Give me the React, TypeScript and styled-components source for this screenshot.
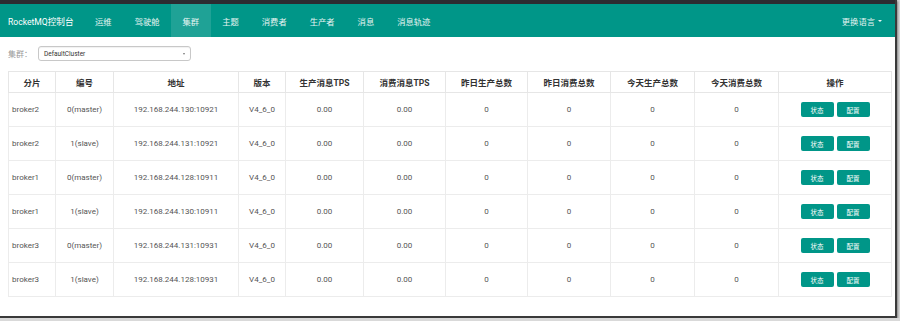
import React from 'react'
import styled, { createGlobalStyle } from 'styled-components'

const GlobalStyle = createGlobalStyle`
  html, body {
    margin: 0;
    padding: 0;
    background: #d9d9d9;
    font-family: Roboto, "Noto Sans CJK SC", sans-serif;
  }
`

const Frame = styled.div`
  width: 895px;
  height: 316px;
  background: #fff;
  border-right: 2px solid #3a3a3a;
  border-bottom: 2px solid #3a3a3a;
  box-shadow: 1px 1px 2px rgba(0, 0, 0, 0.4);
  overflow: hidden;
`
const TopStrip = styled.div`
  height: 4px;
  background: #2c2c31;
`
const Navbar = styled.div`
  height: 33px;
  background: #009688;
  display: flex;
  align-items: stretch;
  padding: 0 8px;
  color: #fff;
`
const Brand = styled.div`
  display: flex;
  align-items: center;
  font-size: 8.6px;
  margin-right: 10px;
`
const NavItem = styled.div<{ $active?: boolean }>`
  display: flex;
  align-items: center;
  padding: 0 11.5px;
  font-size: 8.3px;
  color: #e6f4f2;
  background: ${(p) => (p.$active ? 'rgba(255,255,255,0.12)' : 'transparent')};
`
const Lang = styled.div`
  margin-left: auto;
  display: flex;
  align-items: center;
  gap: 3px;
  font-size: 8.3px;
  color: #e6f4f2;
  padding-right: 5px;
`
const Caret = styled.span`
  width: 0;
  height: 0;
  border-left: 2px solid transparent;
  border-right: 2px solid transparent;
  border-top: 2.5px solid #e6f4f2;
`
const Content = styled.div`
  padding: 9px 4px 0 8px;
`
const FilterRow = styled.div`
  display: flex;
  align-items: center;
  height: 15px;
  margin-bottom: 10px;
`
const Label = styled.span`
  font-size: 8px;
  color: #9a9a9a;
  width: 30px;
`
const Select = styled.div`
  width: 153px;
  height: 15px;
  border: 1px solid #c8c8c8;
  border-radius: 3px;
  display: flex;
  align-items: center;
  justify-content: space-between;
  padding: 0 5px;
  box-sizing: border-box;
  font-size: 6.5px;
  color: #333;
  box-shadow: inset 0 1px 1px rgba(0, 0, 0, 0.06);
`
const SelectArrow = styled.span`
  width: 0;
  height: 0;
  border-left: 1.5px solid transparent;
  border-right: 1.5px solid transparent;
  border-top: 2px solid #777;
`
const Table = styled.table`
  width: 883px;
  border-collapse: collapse;
  table-layout: fixed;
  border: 1px solid #e2e2e2;
`
const Th = styled.th`
  height: 20px;
  padding: 0;
  font-size: 8.5px;
  font-weight: bold;
  color: #333;
  border: 1px solid #e6e6e6;
  text-align: center;
`
const Td = styled.td<{ $left?: boolean }>`
  height: 33px;
  padding: 0 ${(p) => (p.$left ? '3px' : '0')};
  font-size: 8px;
  color: #555;
  border: 1px solid #ececec;
  text-align: ${(p) => (p.$left ? 'left' : 'center')};
`
const Actions = styled.div`
  display: flex;
  justify-content: center;
  gap: 3px;
`
const Button = styled.button`
  width: 33px;
  height: 15px;
  padding: 0;
  border: none;
  border-radius: 2px;
  background: #009688;
  color: #fff;
  font-size: 6.5px;
  font-family: inherit;
`

const navItems = ['运维', '驾驶舱', '集群', '主题', '消费者', '生产者', '消息', '消息轨迹']
const columns = [
  { title: '分片', width: 47 },
  { title: '编号', width: 58 },
  { title: '地址', width: 125 },
  { title: '版本', width: 47 },
  { title: '生产消息TPS', width: 78 },
  { title: '消费消息TPS', width: 82 },
  { title: '昨日生产总数', width: 82 },
  { title: '昨日消费总数', width: 83 },
  { title: '今天生产总数', width: 84 },
  { title: '今天消费总数', width: 84 },
  { title: '操作', width: 113 },
]
const brokers = [
  { name: 'broker2', id: '0(master)', addr: '192.168.244.130:10921' },
  { name: 'broker2', id: '1(slave)', addr: '192.168.244.131:10921' },
  { name: 'broker1', id: '0(master)', addr: '192.168.244.128:10911' },
  { name: 'broker1', id: '1(slave)', addr: '192.168.244.130:10911' },
  { name: 'broker3', id: '0(master)', addr: '192.168.244.131:10931' },
  { name: 'broker3', id: '1(slave)', addr: '192.168.244.128:10931' },
]

const App: React.FC = () => {
  return (
    <>
      <GlobalStyle />
      <Frame>
        <TopStrip />
        <Navbar>
          <Brand>RocketMQ控制台</Brand>
          {navItems.map((item) => (
            <NavItem key={item} $active={item === '集群'}>
              {item}
            </NavItem>
          ))}
          <Lang>
            更换语言 <Caret />
          </Lang>
        </Navbar>
        <Content>
          <FilterRow>
            <Label>集群：</Label>
            <Select>
              DefaultCluster
              <SelectArrow />
            </Select>
          </FilterRow>
          <Table>
            <colgroup>
              {columns.map((c) => (
                <col key={c.title} style={{ width: c.width }} />
              ))}
            </colgroup>
            <thead>
              <tr>
                {columns.map((c) => (
                  <Th key={c.title}>{c.title}</Th>
                ))}
              </tr>
            </thead>
            <tbody>
              {brokers.map((b) => (
                <tr key={b.addr + b.name}>
                  <Td $left>{b.name}</Td>
                  <Td>{b.id}</Td>
                  <Td>{b.addr}</Td>
                  <Td>V4_6_0</Td>
                  <Td>0.00</Td>
                  <Td>0.00</Td>
                  <Td>0</Td>
                  <Td>0</Td>
                  <Td>0</Td>
                  <Td>0</Td>
                  <Td>
                    <Actions>
                      <Button>状态</Button>
                      <Button>配置</Button>
                    </Actions>
                  </Td>
                </tr>
              ))}
            </tbody>
          </Table>
        </Content>
      </Frame>
    </>
  )
}

export default App
